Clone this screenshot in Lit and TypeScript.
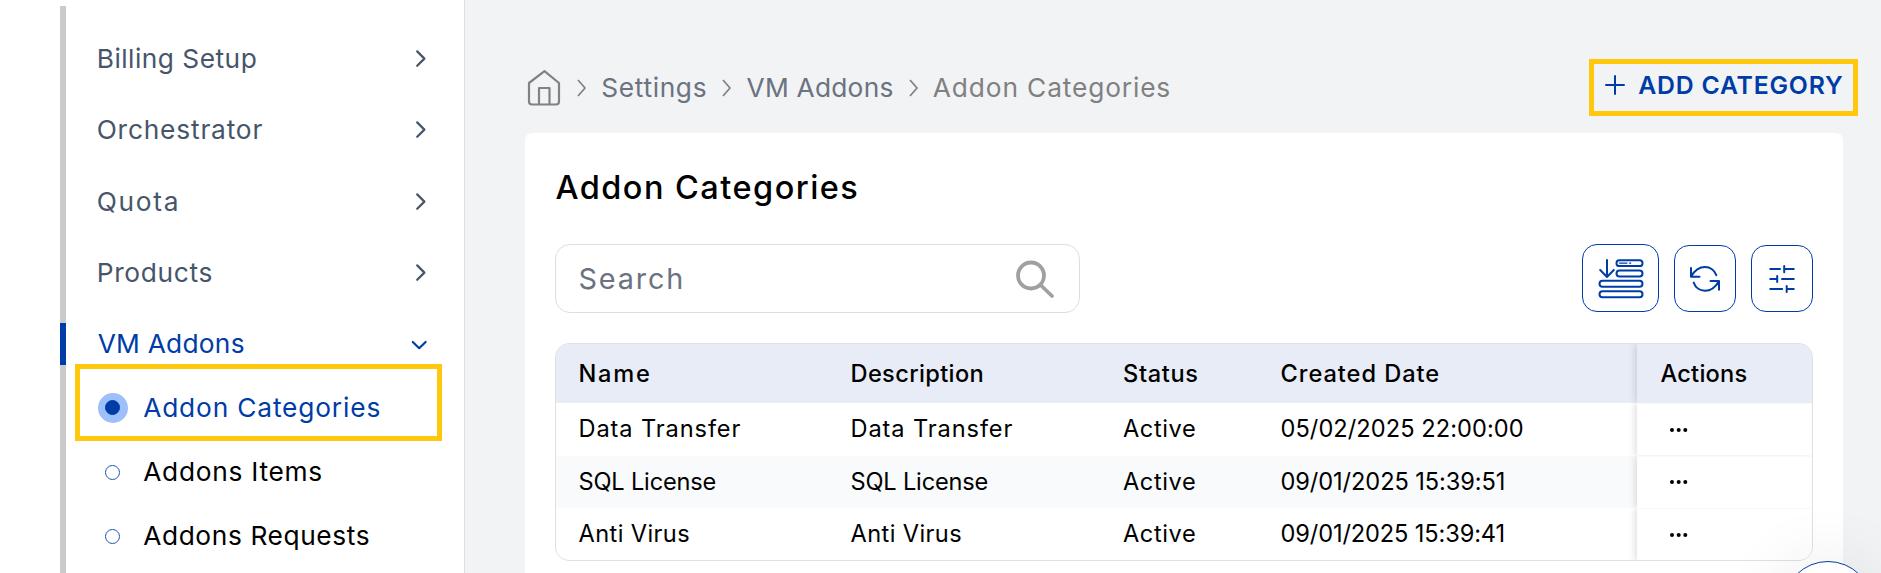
import { LitElement, html, css, svg } from "lit";
import { customElement, property } from "lit/decorators.js";
import { classMap } from "lit/directives/class-map.js";
import { styleMap } from "lit/directives/style-map.js";

/** A label together with its letter-spacing in pixels. */
type Label = [text: string, tracking: number];

const label = ([text, tracking]: Label) =>
  html`<span style=${styleMap({ letterSpacing: `${tracking}px` })}>${text}</span>`;

const NAV: Label[] = [
  ["Billing Setup", 0.49],
  ["Orchestrator", 0.82],
  ["Quota", 1.7],
  ["Products", 0.68],
];

const SUB: Label[] = [
  ["Addon Categories", 0.84],
  ["Addons Items", 0.73],
  ["Addons Requests", 0.61],
];

const HEAD: Label[] = [
  ["Name", 1.75],
  ["Description", 0.36],
  ["Status", 0.65],
  ["Created Date", 0.96],
];

const ROWS: Label[][] = [
  [["Data Transfer", 0.9], ["Data Transfer", 0.9], ["Active", 0.59], ["05/02/2025 22:00:00", 0.06]],
  [["SQL License", -0.18], ["SQL License", -0.18], ["Active", 0.59], ["09/01/2025 15:39:51", -0.08]],
  [["Anti Virus", 0.4], ["Anti Virus", 0.4], ["Active", 0.59], ["09/01/2025 15:39:41", -0.12]],
];

@customElement("side-nav")
export class SideNav extends LitElement {
  static styles = css`
    :host {
      display: block;
      box-sizing: border-box;
      height: 573px;
      padding-left: 60px;
      background: #fff;
      border-right: 1px solid #dedfe1;
      overflow: hidden;
      font-size: 26.3px;
      line-height: 32px;
      color: #475569;
    }
    .rail {
      box-sizing: border-box;
      height: 567px;
      margin-top: 6px;
      border-left: 6px solid #cacaca;
      padding-top: 17.6px;
    }
    .item {
      position: relative;
      display: flex;
      align-items: center;
      justify-content: space-between;
      height: 71.25px;
      padding: 0 34.5px 0 30.7px;
    }
    .item.open {
      color: #003ca6;
      padding-left: 31.7px;
      margin-bottom: -4px;
    }
    .item.open::before {
      content: "";
      position: absolute;
      left: -6px;
      top: 14.5px;
      width: 6px;
      height: 42px;
      background: #003ca6;
    }
    .chev { width: 20px; height: 20px; fill: none; stroke: currentColor; stroke-width: 2.2; stroke-linecap: round; stroke-linejoin: round; }
    .sub {
      position: relative;
      display: flex;
      align-items: center;
      gap: 15.7px;
      height: 64.2px;
      padding-left: 31.5px;
      color: #000;
    }
    .sub.active { color: #003ca6; }
    .dot { display: grid; place-items: center; width: 30px; height: 30px; border-radius: 50%; }
    .dot::before {
      content: "";
      box-sizing: border-box;
      width: 15px;
      height: 15px;
      border-radius: 50%;
      border: 1.3px solid #2456b4;
    }
    .active .dot { background: #9dbffa; }
    .active .dot::before { background: #003ca6; border-color: #003ca6; }
    .mark {
      position: absolute;
      box-sizing: border-box;
      left: 9px;
      top: -12px;
      width: 367px;
      height: 77px;
      border: 5px solid #ffc80d;
    }
  `;

  render() {
    return html`
      <nav class="rail">
        ${NAV.map(
          (n) => html`<div class="item">${label(n)}<svg class="chev" viewBox="0 0 20 20"><path d="M7.2 2.4 14.4 9.6 7.2 16.8" /></svg></div>`
        )}
        <div class="item open">
          ${label(["VM Addons", 0.25])}
          <svg class="chev" viewBox="0 0 20 20"><path d="M2.8 8 9.2 14.2 15.6 8" /></svg>
        </div>
        ${SUB.map(
          (s, i) => html`<div class=${classMap({ sub: true, active: i === 0 })}>
            <i class="dot"></i>${label(s)}${i === 0 ? html`<div class="mark"></div>` : null}
          </div>`
        )}
      </nav>
    `;
  }
}

const ICONS: Record<string, unknown> = {
  rows: svg`<svg width="46" height="40" viewBox="0 0 46 40">
    <path d="M9 1v17M2.2 11 9 18l6.8-7" />
    <rect x="18.5" y="1.2" width="26" height="5.9" rx="2.9" />
    <path d="M21.5 4.1h7.500M31.500 4.100h1.200" stroke-width="1.3" />
    <rect x="18.5" y="11.5" width="26" height="6" rx="3" />
    <rect x="1.5" y="21.8" width="43" height="6" rx="3" />
    <rect x="1.5" y="32.2" width="43" height="6" rx="3" />
  </svg>`,
  refresh: svg`<svg width="32" height="28" viewBox="0 0 32 28">
    <path d="M2 3v8.700h8.500M30 24.800v-8.700h-8.500M2.300 11.300C5.500 5.600 10.500 2 16 2c5.200 0 9.600 3.400 11.300 8.200M29.700 16.500C26.500 22.200 21.500 25.800 16 25.800c-5.200 0-9.600-3.400-11.300-8.200" />
  </svg>`,
  tune: svg`<svg width="28" height="28" viewBox="0 0 28 28">
    <path d="M2.200 4h9.800M17 4h8.800M16.200 1v6.200M2.200 14h7M9.200 11v6M14 14h11.800M2.200 24h12M19 24h6.800M18.700 21v6" />
  </svg>`,
};

@customElement("tool-button")
export class ToolButton extends LitElement {
  @property() icon = "rows";

  static styles = css`
    :host {
      box-sizing: border-box;
      display: grid;
      place-items: center;
      width: 62px;
      height: 67px;
      border: 1px solid #003ca6;
      border-radius: 15px;
      background: #fff;
    }
    :host([icon="rows"]) { width: 77px; height: 68px; }
    svg { display: block; fill: none; stroke: #003ca6; stroke-width: 2; stroke-linecap: round; stroke-linejoin: round; }
    :host([icon="rows"]) svg { margin-top: 1px; }
  `;

  render() {
    return ICONS[this.icon];
  }
}

@customElement("category-table")
export class CategoryTable extends LitElement {
  static styles = css`
    :host {
      display: block;
      box-sizing: border-box;
      height: 218px;
      border: 1px solid #dfe0e2;
      border-radius: 14px;
      overflow: hidden;
      background: #fff;
      font-size: 23.6px;
      line-height: 28px;
      color: #000;
    }
    .row {
      display: grid;
      grid-template-columns: 272px 272.5px 157.5px 1fr 175px;
      height: 52.5px;
    }
    .row > div { display: flex; align-items: center; padding-left: 22.5px; }
    .row.head { height: 59px; font-weight: 500; background: #e8ecf6; }
    .row.alt { background: #f8fafc; }
    .row > .act {
      padding-left: 23.5px;
      background: #fff;
      box-shadow: -2px 0 7px rgba(0, 0, 0, 0.13);
      clip-path: inset(0 0 0 -10px);
      border-top: 1px solid #f9f9fa;
    }
    .row.head > .act { background: #e8ecf6; border-top-color: #e8ecf6; }
    .dots { width: 20px; height: 6px; margin-left: 8px; display: block; }
  `;

  render() {
    return html`
      <div class="row head">
        ${HEAD.map((h) => html`<div>${label(h)}</div>`)}
        <div class="act">${label(["Actions", 0.23])}</div>
      </div>
      ${ROWS.map(
        (r, i) => html`<div class=${classMap({ row: true, alt: i === 1 })}>
          ${r.map((c) => html`<div>${label(c)}</div>`)}
          <div class="act">
            <svg class="dots" viewBox="0 0 20 6"><circle cx="3" cy="3" r="2" /><circle cx="9.7" cy="3" r="2" /><circle cx="16.3" cy="3" r="2" /></svg>
          </div>
        </div>`
      )}
    `;
  }
}

@customElement("app-root")
export class AppRoot extends LitElement {
  static styles = css`
    :host {
      position: relative;
      display: grid;
      grid-template-columns: 465px 1fr;
      width: 1881px;
      height: 573px;
      overflow: hidden;
      background: #f2f3f5;
      font-family: Inter, "Liberation Sans", sans-serif;
    }
    main { display: flex; flex-direction: column; padding: 0 38px 0 60px; }
    .top { display: flex; align-items: flex-start; justify-content: space-between; height: 133px; box-sizing: border-box; }
    .crumbs {
      display: flex;
      align-items: center;
      height: 36px;
      padding: 70px 0 0 2px;
      font-size: 26.3px;
      line-height: 32px;
      color: #6b7280;
    }
    .crumbs svg { fill: none; stroke: #808285; stroke-linejoin: round; flex: none; }
    .home { width: 35px; height: 36px; stroke-width: 2.2; }
    .sep { width: 10px; height: 20px; stroke-width: 1.8; margin: 0 14px 0 15.3px; }
    .crumbs .last { color: #808080; }
    .add {
      box-sizing: border-box;
      display: flex;
      align-items: center;
      width: 269px;
      height: 57px;
      margin: 59px -15px 0 0;
      padding: 0 0 6px 10px;
      border: 5px solid #ffc80d;
      font-size: 24.8px;
      font-weight: 600;
      line-height: 30px;
      color: #003ca6;
      white-space: nowrap;
    }
    .plus { width: 22px; height: 22px; margin-right: 12.3px; fill: none; stroke: #003ca6; stroke-width: 2; stroke-linecap: round; }
    .card { flex: 1; background: #fff; border-radius: 7px 7px 0 0; padding: 0 30px; }
    h1 { margin: 34.5px 0 0 0.5px; font-size: 32.5px; line-height: 40px; font-weight: 500; color: #000; }
    .bar { display: flex; align-items: flex-start; justify-content: space-between; margin-top: 36.5px; }
    .search {
      box-sizing: border-box;
      display: flex;
      align-items: center;
      justify-content: space-between;
      width: 525px;
      height: 69px;
      padding: 0 24px 0 22.5px;
      border: 1px solid #dedede;
      border-radius: 15px;
      font-size: 28.8px;
      line-height: 34px;
      color: #6b7280;
    }
    .lens { width: 40px; height: 40px; fill: none; stroke: #a0a0a0; stroke-width: 3.8; stroke-linecap: round; }
    .tools { display: flex; align-items: flex-end; gap: 15px; height: 68px; }
    category-table { margin-top: 30px; }
    .fab {
      position: absolute;
      box-sizing: border-box;
      left: 1783px;
      top: 561px;
      width: 90px;
      height: 90px;
      border-radius: 50%;
      border: 1px solid #003ca6;
      background: #fff;
      box-shadow: 0 0 70px rgba(0, 0, 0, 0.09);
    }
  `;

  private sep() {
    return html`<svg class="sep" viewBox="0 0 10 20"><path d="M1 2 8 10 1 18" /></svg>`;
  }

  render() {
    return html`
      <side-nav></side-nav>
      <main>
        <div class="top">
          <div class="crumbs">
            <svg class="home" viewBox="0 0 35 36">
              <path d="M17.5 1.2 32 13v18.500a3 3 0 0 1-3 3H5a3 3 0 0 1-3-3V13Z" />
              <path d="M12 34.500V18h10.500v16.500" />
            </svg>
            ${this.sep()}${label(["Settings", 0.65])}
            ${this.sep()}${label(["VM Addons", 0.25])}
            ${this.sep()}<span class="last">${label(["Addon Categories", 0.86])}</span>
          </div>
          <div class="add">
            <svg class="plus" viewBox="0 0 22 22"><path d="M11 2v18M2 11h18" /></svg>
            ${label(["ADD CATEGORY", 0.77])}
          </div>
        </div>
        <section class="card">
          <h1>${label(["Addon Categories", 1.46])}</h1>
          <div class="bar">
            <div class="search">
              ${label(["Search", 1.85])}
              <svg class="lens" viewBox="0 0 40 40"><circle cx="16" cy="16.5" r="13" /><path d="M25.500 26 37 37" /></svg>
            </div>
            <div class="tools">
              <tool-button icon="rows"></tool-button>
              <tool-button icon="refresh"></tool-button>
              <tool-button icon="tune"></tool-button>
            </div>
          </div>
          <category-table></category-table>
        </section>
      </main>
      <div class="fab"></div>
    `;
  }
}
